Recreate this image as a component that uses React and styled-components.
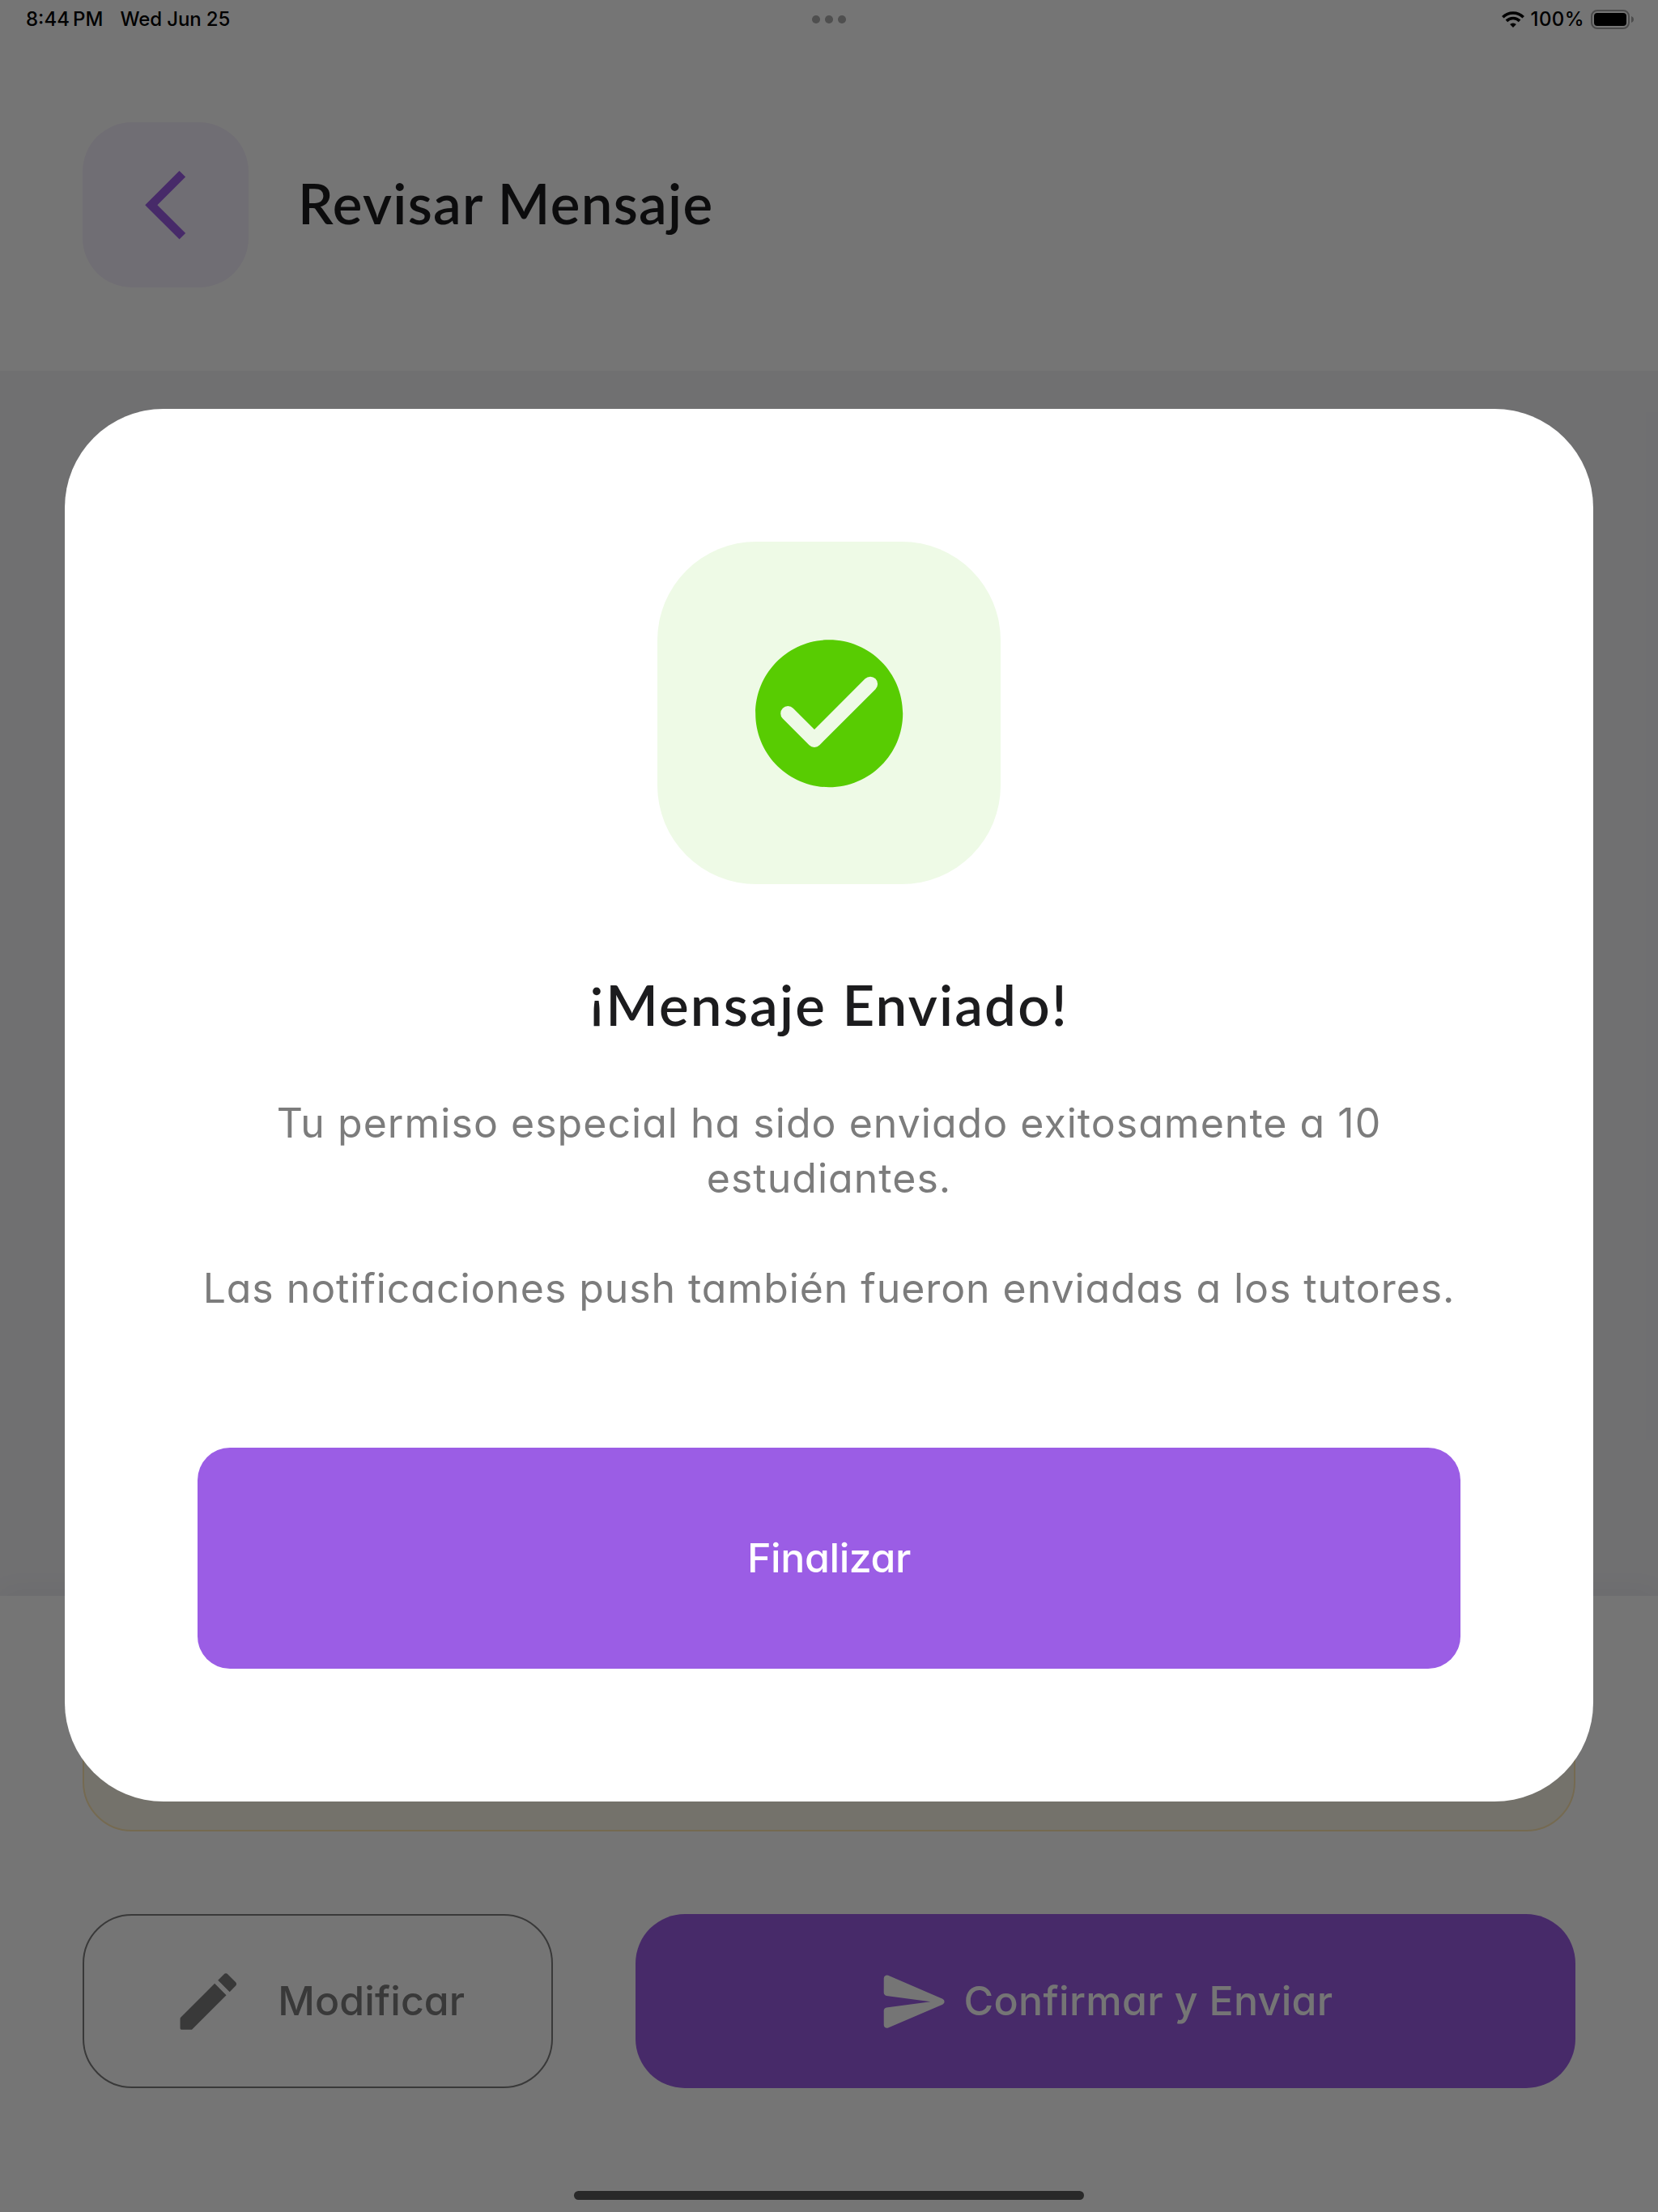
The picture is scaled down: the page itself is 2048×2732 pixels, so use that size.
import React from "react";
import styled, { createGlobalStyle } from "styled-components";

const GlobalStyle = createGlobalStyle`
  *, *::before, *::after { box-sizing: border-box; }
  body { margin: 0; }
  button { appearance: none; margin: 0; border: 0; padding: 0; background: none; }
  svg { display: block; flex: none; }
`;

const heading = `"Lato", "Open Sans", sans-serif`;
const text = `"Inter", "Open Sans", sans-serif`;

const Device = styled.div`
  position: relative;
  width: 2048px;
  height: 2732px;
  overflow: hidden;
  background: #ffffff;
`;

const Screen = styled.div`
  height: 100%;
  display: flex;
  flex-direction: column;
  background: #f3f3f7;
`;

const Header = styled.header`
  display: flex;
  align-items: center;
  gap: 61px;
  height: 457.5px;
  padding: 150.7px 102.4px 102.2px;
  background: #ffffff;
`;

const BackButton = styled.button`
  display: flex;
  align-items: center;
  justify-content: center;
  width: 204.6px;
  height: 204.6px;
  border-radius: 61px;
  background: #f5effc;
  color: #9b5de5;
`;

const PageTitle = styled.h1`
  margin: 0;
  padding-bottom: 5px;
  font: 600 69px/80px ${heading};
  letter-spacing: 1.3px;
  color: #1c1c1e;
`;

const Content = styled.main`
  flex: 1;
`;

const BottomPanel = styled.footer`
  display: flex;
  flex-direction: column;
  gap: 102.4px;
  height: 761px;
  padding: 102px 102.4px 0;
  background: #ffffff;
  box-shadow: 0 -8px 30px rgba(0, 0, 0, 0.04);
`;

const Notice = styled.div`
  height: 189px;
  border: 2px solid #ffe6b0;
  border-radius: 61px;
  background: #fdf9ea;
`;

const Actions = styled.div`
  display: grid;
  grid-template-columns: 580.4px 1fr;
  gap: 101.8px;
`;

const ActionButton = styled.button`
  display: flex;
  align-items: center;
  justify-content: center;
  gap: ${(p) => (p.$filled ? 14.5 : 40)}px;
  height: 215px;
  border: ${(p) => (p.$filled ? "0" : "2px solid #7c7c7c")};
  border-radius: 61px;
  background: ${(p) => (p.$filled ? "#9b5de5" : "transparent")};
  color: ${(p) => (p.$filled ? "#ffffff" : "#7c7c7c")};
`;

const ButtonLabel = styled.span`
  padding-bottom: 2px;
  font: 500 50px/68px ${text};
  font-feature-settings: "cv11";
  letter-spacing: ${(p) => p.$tracking}px;
  white-space: nowrap;
`;

const Scrim = styled.div`
  position: absolute;
  inset: 0;
  display: flex;
  align-items: center;
  justify-content: center;
  background: rgba(0, 0, 0, 0.54);
`;

const Dialog = styled.section`
  display: flex;
  flex-direction: column;
  align-items: center;
  width: 1888px;
  padding: 163.8px;
  margin-bottom: 2px;
  border-radius: 122px;
  background: #ffffff;
`;

const SuccessTile = styled.div`
  display: flex;
  align-items: center;
  justify-content: center;
  width: 423.6px;
  height: 423.4px;
  border-radius: 122px;
  background: #eefae6;
  color: #58cc02;
`;

const DialogTitle = styled.h2`
  margin: 108.5px 0 0;
  font: 600 69px/80px ${heading};
  letter-spacing: 2.2px;
  color: #1c1c1e;
`;

const RaisedMark = styled.span`
  line-height: 0;
  vertical-align: 12px;
`;

const Message = styled.div`
  display: flex;
  flex-direction: column;
  gap: 68px;
  align-self: stretch;
  margin: 72.2px -10px 162.8px;
`;

const Paragraph = styled.p`
  margin: 0;
  font: 400 50px/68px ${text};
  font-feature-settings: "cv11";
  letter-spacing: ${(p) => p.$tracking}px;
  text-align: center;
  color: #7c7c7c;
`;

const FinishButton = styled.button`
  align-self: stretch;
  height: 273px;
  border-radius: 40px;
  background: #9b5de5;
  color: #ffffff;
`;

const StatusBar = styled.div`
  position: absolute;
  inset: 0 0 auto;
  display: grid;
  grid-template-columns: 1fr auto 1fr;
  align-items: center;
  height: 48px;
  padding: 0 30px 0 32px;
  color: #000000;
`;

const StatusGroup = styled.div`
  display: flex;
  align-items: center;
  justify-content: ${(p) => (p.$end ? "flex-end" : "flex-start")};
  gap: ${(p) => p.$gap}px;
`;

const StatusText = styled.span`
  padding-bottom: 1px;
  font: 500 24px/30px ${text};
  letter-spacing: ${(p) => p.$tracking || 0}px;
  white-space: nowrap;
`;

const Dots = styled.div`
  display: flex;
  gap: 6px;
  margin-right: 2px;
`;

const Dot = styled.i`
  width: 10px;
  height: 10px;
  border-radius: 50%;
  background: #4f4f4f;
`;

const HomeIndicator = styled.div`
  position: absolute;
  bottom: 15px;
  left: 50%;
  width: 630px;
  height: 11px;
  border-radius: 6px;
  background: #292929;
  transform: translateX(-50%);
`;

const Icon = ({ size, d, viewBox = "0 0 24 24" }) => (
  <svg width={size} height={size} viewBox={viewBox} fill="currentColor">
    <path d={d} />
  </svg>
);

const icons = {
  back: "M17.81 3.87L16.03 2.1 6.14 12l9.9 9.9 1.77-1.77L9.68 12l8.13-8.13z",
  check:
    "M12 2C6.48 2 2 6.48 2 12s4.48 10 10 10 10-4.48 10-10S17.52 2 12 2zM9.29 16.29L5.7 12.7a.996.996 0 1 1 1.41-1.41L10 14.17l6.88-6.88a.996.996 0 1 1 1.41 1.41l-7.59 7.59a.996.996 0 0 1-1.41 0z",
  edit:
    "M3 17.46v3.04c0 .28.22.5.5.5h3.04c.13 0 .26-.05.35-.15L17.81 9.94l-3.75-3.75L3.15 17.1c-.1.1-.15.22-.15.36zM20.71 7.04a.996.996 0 0 0 0-1.41l-2.34-2.34a.996.996 0 0 0-1.41 0l-1.83 1.83 3.75 3.75 1.83-1.83z",
  send:
    "M3.4 20.4l17.45-7.48a1 1 0 0 0 0-1.84L3.4 3.6a.993.993 0 0 0-1.39.91L2 9.12c0 .5.37.93.87.99L17 12 2.87 13.88c-.5.07-.87.5-.87 1l.01 4.61c0 .71.73 1.2 1.39.91z",
};

const WifiIcon = () => (
  <svg width="28" height="20" viewBox="0 0 28 20" fill="none" stroke="currentColor" strokeWidth="3.6">
    <path d="M1.3 7.2a18 18 0 0 1 25.4 0" />
    <path d="M5.9 11.9a11.5 11.5 0 0 1 16.2 0" />
    <path d="M14 20l-3.9-3.9a5.6 5.6 0 0 1 7.8 0z" fill="currentColor" stroke="none" />
  </svg>
);

const BatteryIcon = () => (
  <svg width="53" height="24" viewBox="0 0 53 24">
    <rect x="1" y="1" width="46" height="22" rx="7" fill="none" stroke="#4b4b4b" strokeWidth="2" />
    <rect x="4" y="4" width="40" height="16" rx="4" fill="currentColor" />
    <path d="M50 8c1.8.7 3 2.2 3 4s-1.2 3.3-3 4z" fill="#4b4b4b" />
  </svg>
);

export default function App() {
  return (
    <>
      <GlobalStyle />
      <Device>
        <Screen>
          <Header>
            <BackButton aria-label="Volver">
              <Icon size={102.6} d={icons.back} />
            </BackButton>
            <PageTitle>Revisar Mensaje</PageTitle>
          </Header>
          <Content />
          <BottomPanel>
            <Notice />
            <Actions>
              <ActionButton>
                <Icon size={92.4} d={icons.edit} />
                <ButtonLabel $tracking={0.1}>Modificar</ButtonLabel>
              </ActionButton>
              <ActionButton $filled>
                <Icon size={92.4} d={icons.send} />
                <ButtonLabel $tracking={0.35}>Confirmar y Enviar</ButtonLabel>
              </ActionButton>
            </Actions>
          </BottomPanel>
        </Screen>

        <Scrim>
          <Dialog role="dialog">
            <SuccessTile>
              <Icon size={218.4} d={icons.check} />
            </SuccessTile>
            <DialogTitle>
              <RaisedMark>¡</RaisedMark>Mensaje Enviado!
            </DialogTitle>
            <Message>
              <Paragraph $tracking={1.03}>
                Tu permiso especial ha sido enviado exitosamente a 10 estudiantes.
              </Paragraph>
              <Paragraph $tracking={0.93}>
                Las notificaciones push también fueron enviadas a los tutores.
              </Paragraph>
            </Message>
            <FinishButton>
              <ButtonLabel $tracking={-0.4}>Finalizar</ButtonLabel>
            </FinishButton>
          </Dialog>
        </Scrim>

        <StatusBar>
          <StatusGroup $gap={21}>
            <StatusText>8:44{"\u2009"}PM</StatusText>
            <StatusText $tracking={-0.1}>Wed Jun 25</StatusText>
          </StatusGroup>
          <Dots>
            <Dot />
            <Dot />
            <Dot />
          </Dots>
          <StatusGroup $end $gap={8}>
            <WifiIcon />
            <StatusText $tracking={0.4}>100%</StatusText>
            <BatteryIcon />
          </StatusGroup>
        </StatusBar>
        <HomeIndicator />
      </Device>
    </>
  );
}
